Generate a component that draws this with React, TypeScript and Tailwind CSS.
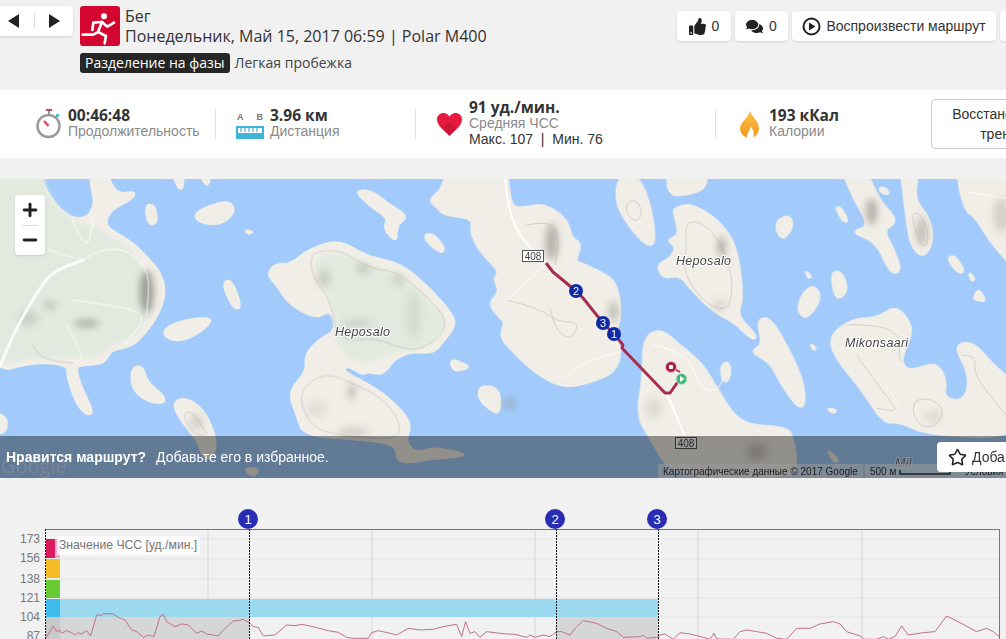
import React from 'react';
import { Minus, Plus, Star } from 'lucide-react';
import { FaComments, FaThumbsUp } from 'react-icons/fa';

// all coordinates below were read off 3x crops, so the groups scale them back down
const leftLand = [
  '-40,-40 125,-40 125,12 135,40 170,95 215,130 260,130 285,90 275,40 265,-40 310,-40 345,60 405,48 400,70 330,105 315,150 350,175 400,205 440,245 480,290 497,345 480,410 440,470 395,515 330,525 315,565 255,570 225,575 245,640 280,710 265,722 230,690 200,600 205,570 100,560 -40,600',
  '800,295 830,265 870,270 930,220 1020,195 1100,245 1200,265 1280,330 1360,420 1365,455 1330,500 1300,535 1230,530 1180,555 1150,600 1100,590 1090,600 1040,570 1030,590 1130,640 1200,700 1235,750 1215,800 1250,835 1300,815 1420,842 1300,850 1240,862 1190,860 1190,805 1030,790 910,780 890,720 865,650 920,590 915,540 960,490 1005,470 1000,420 980,410 950,430 870,390 830,330',
  '435,90 465,90 472,145 445,150',
  '585,110 680,75 705,100 690,130 650,150 590,140',
  '1075,45 1120,50 1170,90 1225,125 1190,150 1190,205 1150,160 1165,130 1120,100 1075,60',
  '1270,180 1300,175 1335,220 1325,235 1290,210',
  '735,165 760,170 745,178',
  '672,320 695,315 725,395 705,405 675,350',
  '485,470 530,440 630,425 630,450 560,495 510,495',
  '395,575 430,575 440,620 490,660 495,685 440,680 395,640',
  '515,690 550,665 610,700 650,790 640,850 610,850 590,790 560,760',
  '730,880 780,880 760,908',
  '-40,715 20,720 20,775 -40,775',
  '1350,550 1400,570 1405,580 1360,590',
  '515,-20 550,-20 550,45 530,35',
  '590,-20 630,-20 625,45',
  '1435,670 1440,630 1500,640 1500,720 1465,700',
];

const rightLand = [
  '-215,75 -170,40 -160,-40 20,-40 30,90 65,100 130,85 200,130 215,190 245,205 225,260 245,265 300,290 350,320 365,420 345,475 365,530 345,590 280,620 190,640 100,590 30,520 0,485 15,440 0,430 -35,385 0,350 -20,310 0,290 -60,230 -90,170 -80,130 -170,120 -185,100',
  '350,25 380,-20 440,40 470,200 440,215 385,150 350,90',
  '500,-20 620,-20 620,40 560,60 505,60',
  '525,100 570,85 650,130 710,210 730,370 710,420 770,480 760,495 720,460 700,440 640,410 570,340 540,300 490,310 470,270 510,250 530,215 500,195 540,180 520,110',
  '430,490 480,460 540,510 610,570 650,640 720,750 860,755 880,790 890,860 880,908 520,908 450,790 410,720 430,600',
  '770,435 810,425 870,530 910,620 915,695 890,695 840,620 810,560 750,530 790,510',
  '830,135 870,120 880,155 850,195 830,170',
  '915,285 935,305 925,310',
  '995,290 1025,290 1045,345 1015,375 1000,345',
  '910,350 945,330 965,370 920,435 890,405',
  '660,570 690,560 690,610 670,625',
  '980,700 1010,705 1000,715',
  '930,505 950,520 940,525',
  '1005,95 1025,100 1045,140 1030,140',
  '1020,-30 1090,-30 1140,80 1180,120 1185,145 1150,165 1180,220 1205,290 1170,295 1130,200 1050,170 1110,155 1060,70',
  '1140,35 1165,45 1165,60 1140,50',
  '1200,-30 1260,-30 1240,70 1290,130 1300,200 1270,250 1230,210 1215,90',
  '1340,250 1365,240 1395,290 1375,295',
  '1405,290 1425,310 1415,320',
  '1420,370 1435,340 1460,380 1430,375',
  '990,480 1060,430 1130,430 1190,390 1235,450 1230,490 1200,560 1230,590 1310,560 1340,620 1330,670 1395,680 1410,600 1360,510 1420,500 1470,560 1560,640 1560,790 1280,780 1200,740 1150,745 1090,650 1000,540',
  '1365,-40 1560,-40 1560,300 1470,200 1430,130 1390,100',
  '980,820 1020,860 1000,860',
];

const hrLeft =
  '137,415 150,395 160,378 170,395 180,390 185,400 200,392 215,398 225,405 235,398 245,402 260,392 272,408 290,345 305,346 310,341 340,342 355,352 375,360 395,390 410,395 430,412 445,405 462,410 480,350 490,343 500,365 525,380 545,372 565,375 590,400 605,393 620,402 640,405 655,408 675,385 700,363 715,362 730,358 748,368 760,380 775,382 790,408 825,405 860,375 885,377 905,373 930,378 950,383 985,392 1015,397 1040,412 1060,415 1105,415 1115,398 1135,392 1170,400 1190,405 1225,385 1260,390 1300,388 1330,380 1370,373 1385,410 1397,365 1410,400 1425,395 1440,412 1460,395 1500,400';
const hrRight =
  '0,400 20,402 45,403 80,412 90,405 105,412 130,405 150,410 170,395 185,395 210,405 230,380 250,362 290,370 320,385 350,395 370,412 420,410 430,405 440,415 470,412 480,405 495,402 520,418 540,398 570,402 610,412 630,418 642,400 650,417 700,418 720,395 740,390 770,395 800,400 830,415 860,418 890,385 930,385 960,372 1000,365 1020,372 1040,395 1080,408 1095,418 1130,418 1150,410 1165,418 1185,410 1205,378 1225,405 1270,398 1305,395 1340,348 1380,368 1430,395 1460,385 1480,395 1498,410';

const statDivider = 'h-8 flex items-center border-l border-[#e3e3e3] shrink-0';
const statValue = "font-['Open_Sans',sans-serif] font-bold text-[15.5px] text-[#333]";

// rounds a point list so the coast doesn't look cut with scissors
function smooth(points: string, closed = true) {
  const p = points.split(' ').map((s) => s.split(',').map(Number));
  const mid = (a: number[], b: number[]) => `${(a[0] + b[0]) / 2},${(a[1] + b[1]) / 2}`;
  if (!closed) {
    let d = `M${p[0].join(',')}`;
    for (let i = 1; i < p.length - 1; i++) d += ` Q${p[i].join(',')} ${mid(p[i], p[i + 1])}`;
    return `${d} L${p[p.length - 1].join(',')}`;
  }
  let d = `M${mid(p[p.length - 1], p[0])}`;
  p.forEach((pt, i) => {
    d += ` Q${pt.join(',')} ${mid(pt, p[(i + 1) % p.length])}`;
  });
  return `${d} Z`;
}

function MapPicture() {
  return (
    <svg viewBox="0 179 1006 299" className="block w-full h-full" style={{ fontFamily: '"Liberation Sans", sans-serif' }}>
      <defs>
        <filter id="soft"><feGaussianBlur stdDeviation="1.2" /></filter>
        <filter id="tint"><feGaussianBlur stdDeviation="6" /></filter>
        <filter id="shade" x="-100%" y="-100%" width="300%" height="300%"><feGaussianBlur stdDeviation="11" /></filter>
      </defs>
      <rect x="0" y="179" width="1006" height="299" fill="#a2cbfb" />

      <g transform="translate(0 175) scale(0.3333)">
        <g filter="url(#soft)">
          {leftLand.map((pts, i) => (
            <path key={i} d={smooth(pts)} fill="#f1eee7" stroke="#f1eee7" strokeWidth="7" strokeLinejoin="round" />
          ))}
        </g>
        <g filter="url(#tint)" fill="#e2eadf">
          <path d={smooth('-40,-40 125,-40 135,40 170,95 215,130 320,170 400,225 440,300 470,350 440,450 380,500 330,510 300,550 100,545 -40,590')} />
          <path d={smooth('940,250 1020,225 1110,275 1190,290 1260,345 1335,420 1335,460 1290,515 1220,528 1170,540 1090,570 1010,530 1000,400 960,320')} />
        </g>
        <g filter="url(#shade)" fill="#8f8d88">
          <ellipse cx="440" cy="350" rx="22" ry="65" opacity="0.8" />
          <ellipse cx="260" cy="445" rx="40" ry="12" opacity="0.6" />
          <ellipse cx="150" cy="390" rx="18" ry="14" opacity="0.4" />
          <ellipse cx="85" cy="430" rx="30" ry="24" opacity="0.25" />
          <ellipse cx="970" cy="310" rx="22" ry="26" opacity="0.3" />
          <ellipse cx="1090" cy="280" rx="24" ry="16" opacity="0.3" />
          <ellipse cx="1195" cy="315" rx="18" ry="16" opacity="0.3" />
          <ellipse cx="1240" cy="420" rx="22" ry="70" opacity="0.16" />
          <ellipse cx="1070" cy="445" rx="45" ry="10" opacity="0.3" />
          <ellipse cx="1055" cy="650" rx="12" ry="26" opacity="0.45" />
          <ellipse cx="950" cy="700" rx="30" ry="26" opacity="0.15" />
          <ellipse cx="1060" cy="770" rx="45" ry="14" opacity="0.3" />
          <ellipse cx="590" cy="740" rx="18" ry="26" opacity="0.3" />
          <ellipse cx="1420" cy="80" rx="45" ry="30" opacity="0.25" />
        </g>
        <g fill="none" stroke="#fff" strokeLinecap="round">
          <path d={smooth('0,575 38,475 130,320 170,285 250,255', false)} strokeWidth="8" />
          <path d={smooth('250,255 300,220 385,225 450,290 440,420', false)} strokeWidth="2.5" />
          <path d={smooth('215,375 380,395 440,430 375,505', false)} strokeWidth="2.5" />
          <path d={smooth('215,130 260,240 280,130', false)} strokeWidth="2.5" />
          <path d={smooth('200,450 250,540 235,560', false)} strokeWidth="2.5" />
          <path d={smooth('60,130 110,220 250,255', false)} strokeWidth="2" />
        </g>
        <g fill="none" stroke="#b5b3a8" strokeWidth="1.5">
          <path d={smooth('930,245 960,228 1020,225 1110,280 1190,290 1260,345 1338,425 1330,480 1250,530 1175,510 1130,490 1010,500 995,380 940,310')} />
          <path d={smooth('905,640 975,592 1060,625 1150,670 1200,740 1195,790 1100,790 950,770 905,700')} />
          <path d={smooth('100,510 110,550 220,565', false)} />
          <path d={smooth('545,715 575,708 610,760 625,780 580,780')} />
        </g>
      </g>

      <g transform="translate(500 175) scale(0.3333)">
        <g filter="url(#soft)">
          {rightLand.map((pts, i) => (
            <path key={i} d={smooth(pts)} fill="#f1eee7" stroke="#f1eee7" strokeWidth="7" strokeLinejoin="round" />
          ))}
        </g>
        <g filter="url(#shade)" fill="#8f8d88">
          <ellipse cx="155" cy="200" rx="20" ry="55" opacity="0.6" />
          <ellipse cx="340" cy="410" rx="14" ry="32" opacity="0.5" />
          <ellipse cx="665" cy="215" rx="12" ry="30" opacity="0.7" />
          <ellipse cx="660" cy="390" rx="20" ry="22" opacity="0.2" />
          <ellipse cx="1115" cy="110" rx="18" ry="40" opacity="0.6" />
          <ellipse cx="1265" cy="170" rx="18" ry="42" opacity="0.45" />
          <ellipse cx="1505" cy="120" rx="25" ry="50" opacity="0.3" />
          <ellipse cx="30" cy="685" rx="20" ry="20" opacity="0.35" />
          <ellipse cx="1300" cy="725" rx="25" ry="20" opacity="0.2" />
          <ellipse cx="460" cy="700" rx="25" ry="30" opacity="0.2" />
          <ellipse cx="770" cy="830" rx="30" ry="26" opacity="0.35" />
        </g>
        <g fill="none" stroke="#fff" strokeLinecap="round">
          <path d={smooth('15,15 25,110 70,200 140,265', false)} strokeWidth="6" />
          <path d={smooth('500,655 550,770 560,800', false)} strokeWidth="6" />
          <path d={smooth('140,265 60,340 20,375', false)} strokeWidth="2.5" />
          <path d={smooth('460,510 560,530 600,640 650,650 670,610', false)} strokeWidth="2.5" />
          <path d={smooth('360,530 250,560 190,610', false)} strokeWidth="2.5" />
          <path d={smooth('1070,540 1170,640 1195,700', false)} strokeWidth="2" />
          <path d={smooth('1400,50 1518,70', false)} strokeWidth="2" />
        </g>
        <g fill="none" stroke="#b5b3a8" strokeWidth="1.5">
          <path d={smooth('20,375 120,400 170,440 240,440 215,495 170,470 150,400', false)} />
          <path d={smooth('80,150 150,135 180,190 165,270', false)} />
          <path d={smooth('370,90 410,70 430,120 400,145')} />
          <path d={smooth('555,150 590,135 650,180 700,300 690,410 620,390 550,300 560,200')} />
          <path d={smooth('1240,670 1310,675 1335,720 1290,765 1240,735')} />
          <path d={smooth('1230,120 1260,110 1290,180 1270,230')} />
          <path d={smooth('1040,450 1195,445 1200,560', false)} />
          <path d={smooth('1070,540 1170,680 1195,710 1130,700', false)} />
          <path d={smooth('1385,540 1430,540 1420,600 1518,720', false)} />
        </g>
      </g>

      {/* road shields and place names */}
      <g fontSize="10" textAnchor="middle" fill="#444">
        <rect x="522.5" y="250.5" width="21" height="11" fill="#fff" stroke="#555" />
        <text x="533" y="259.5">408</text>
        <rect x="675.5" y="437.5" width="21" height="11" fill="#fff" stroke="#555" />
        <text x="686" y="446.5">408</text>
      </g>
      <g fontSize="12.5" fontStyle="italic" fill="#444" stroke="#fff" strokeWidth="2" paintOrder="stroke" letterSpacing="0.3">
        <text x="335" y="336">Heposalo</text>
        <text x="676" y="265">Heposalo</text>
        <text x="845" y="347">Mikonsaari</text>
        <text x="895" y="467" opacity="0.6">Mil</text>
      </g>

      {/* route */}
      <polyline
        points="546,263 553,272 576,291 583,298 603,323 614,334 623,345 622,348 665,393 670,393 677,383 681,379"
        fill="none"
        stroke="#a62f50"
        strokeWidth="3"
        strokeLinejoin="round"
      />
      <polyline points="671,367 680,372" fill="none" stroke="#a62f50" strokeWidth="2" />
      {[
        ['2', 576, 291],
        ['3', 603, 323],
        ['1', 614, 334],
      ].map(([n, x, y]) => (
        <g key={n as string}>
          <circle cx={x} cy={y} r="7" fill="#0f2aa5" />
          <text x={x} y={(y as number) + 4} fontSize="11" textAnchor="middle" fill="#fff">{n}</text>
        </g>
      ))}
      <circle cx="671" cy="367" r="5.5" fill="#a81f45" stroke="#eab9c5" strokeWidth="1" />
      <rect x="669" y="365" width="4" height="4" rx="1" fill="#fff" />
      <circle cx="681.5" cy="379" r="5.5" fill="#3cb878" stroke="#c7e8d4" strokeWidth="1" />
      <polygon points="680,376 680,382 684.5,379" fill="#fff" />

      {/* google attribution sits under the dark bar */}
      <text x="1" y="473" fontSize="20" fill="#fff" opacity="0.4" fontFamily='"Open Sans", sans-serif'>Google</text>
      <rect x="658" y="464" width="348" height="14" fill="#fff" opacity="0.55" />
      <text x="663" y="475" fontSize="10" fill="#333">Картографические данные © 2017 Google</text>
      <line x1="864" y1="464" x2="864" y2="478" stroke="#bbb" />
      <text x="870" y="475" fontSize="10" fill="#333">500 м</text>
      <polyline points="900,470 900,474 950,474 950,470" fill="none" stroke="#333" strokeWidth="1.5" />
      <text x="965" y="475" fontSize="10" fill="#333">Условия</text>
    </svg>
  );
}

function HeartRateChart() {
  const grid = [208, 372, 535, 698, 862];
  const rows = [539, 559, 579, 598, 617];
  const ticks: [string, number][] = [['173', 543], ['156', 562], ['138', 583], ['121', 602], ['104', 621], ['87', 640]];
  const laps: [string, number][] = [['1', 248], ['2', 555], ['3', 657]];
  return (
    <svg viewBox="0 478 1006 161" className="block w-full h-full" style={{ fontFamily: '"Liberation Sans", sans-serif' }}>
      {rows.map((y) => (
        <line key={y} x1="46" x2="999" y1={y} y2={y} stroke="#e4e4e4" />
      ))}
      {grid.map((x) => (
        <line key={x} x1={x} x2={x} y1="529" y2="639" stroke="#d6d6d6" />
      ))}

      <rect x="60" y="599" width="598" height="18" fill="#9bd9f1" />
      <rect x="46" y="617" width="203" height="22" fill="#d5d7d7" />
      <rect x="556" y="617" width="102" height="22" fill="#d5d7d7" />

      <rect x="46" y="539" width="14" height="19" fill="#f3a9c8" />
      <rect x="46" y="539" width="9" height="19" fill="#d91a5c" />
      <rect x="46" y="559" width="14" height="19" fill="#f6bd27" />
      <rect x="46" y="580" width="14" height="18" fill="#68cb33" />
      <rect x="46" y="599" width="14" height="18" fill="#3fbcec" />
      <rect x="46" y="617" width="14" height="22" fill="#c8caca" />

      <rect x="57" y="536" width="143" height="19" fill="#fff" opacity="0.8" />
      <text x="59" y="549" fontSize="12.2" fill="#777">Значение ЧСС [уд./мин.]</text>

      <g transform="translate(0 500) scale(0.3333)">
        <polyline points={hrLeft} fill="none" stroke="#c06f8a" strokeWidth="3" strokeLinejoin="round" />
      </g>
      <g transform="translate(500 500) scale(0.3333)">
        <polyline points={hrRight} fill="none" stroke="#c06f8a" strokeWidth="3" strokeLinejoin="round" />
      </g>

      <line x1="46" x2="999" y1="529.5" y2="529.5" stroke="#777" />
      <line x1="999.5" x2="999.5" y1="529" y2="639" stroke="#777" />
      <line x1="45.5" x2="45.5" y1="529" y2="639" stroke="#111" strokeDasharray="2 1" />
      {laps.map(([n, x]) => (
        <g key={n}>
          <line x1={x + 1.5} x2={x + 1.5} y1="529" y2="639" stroke="#111" strokeDasharray="2 1" />
          <circle cx={x} cy="519" r="10" fill="#2a2db4" />
          <text x={x} y="524" fontSize="13" textAnchor="middle" fill="#fff">{n}</text>
        </g>
      ))}
      {ticks.map(([t, y]) => (
        <text key={t} x="40" y={y} fontSize="12" textAnchor="end" fill="#777">{t}</text>
      ))}
    </svg>
  );
}

export default function App() {
  return (
    <div className="w-[1006px] h-[639px] overflow-hidden bg-[#f1f1f1] font-['Liberation_Sans',sans-serif]">
      {/* Header */}
      <div className="h-[90px] flex">
        <div className="w-[677px] shrink-0 flex items-start font-['Open_Sans',sans-serif]">
          <div className="-ml-[10px] mt-[6px] w-[83px] h-[30px] bg-white rounded shadow-sm flex items-center justify-between pl-[18px] pr-[13px] shrink-0">
            <svg width="11" height="14" viewBox="0 0 11 14"><polygon points="11,0 11,14 0,7" fill="#222" /></svg>
            <span className="w-px h-4 bg-[#ddd]" />
            <svg width="11" height="14" viewBox="0 0 11 14"><polygon points="0,0 0,14 11,7" fill="#222" /></svg>
          </div>
          <div className="ml-[7px] mt-[6px]">
            <div className="flex gap-[5px]">
              <div className="w-10 h-10 rounded-[3px] bg-[#d4062f] shrink-0">
                <svg width="40" height="40" viewBox="240 18 120 120" fill="none" stroke="#fff" strokeWidth="8" strokeLinecap="round" strokeLinejoin="round">
                  <circle cx="312" cy="49" r="9" fill="#fff" stroke="none" />
                  <path d="M277 90 L280 68 L306 66 L294 96 L318 108 L314 130" />
                  <path d="M306 66 L322 80 L342 68" />
                  <path d="M291 98 L280 104 L248 104" />
                </svg>
              </div>
              <div className="text-[16px] leading-[20px] text-[#333] whitespace-nowrap">
                <div>Бег</div>
                <div>Понедельник, Май 15, 2017 06:59 | Polar M400</div>
              </div>
            </div>
            <div className="mt-[6px] flex items-center gap-[5px] text-[14px] whitespace-nowrap">
              <span className="bg-[#262626] text-white rounded-[3px] h-5 leading-5 px-[5px]">Разделение на фазы</span>
              <span className="text-[#444]">Легкая пробежка</span>
            </div>
          </div>
        </div>
        <div className="flex items-start gap-1 mt-[11px] shrink-0 text-[14px] text-[#333]">
          <div className="w-[54px] h-[30px] bg-white rounded shadow-sm flex items-center justify-center gap-[6px]">
            <FaThumbsUp size={17} className="text-[#222]" />
            <span>0</span>
          </div>
          <div className="w-[53px] h-[30px] bg-white rounded shadow-sm flex items-center justify-center gap-[6px]">
            <FaComments size={17} className="text-[#222]" />
            <span>0</span>
          </div>
          <div className="w-[204px] h-[30px] bg-white rounded shadow-sm flex items-center justify-center gap-[5px] whitespace-nowrap">
            <svg width="19" height="19" viewBox="0 0 19 19">
              <circle cx="9.5" cy="9.5" r="8" fill="none" stroke="#222" strokeWidth="2" />
              <polygon points="7,5.5 7,13.5 13.5,9.5" fill="#222" />
            </svg>
            <span>Воспроизвести маршрут</span>
          </div>
          <div className="w-[54px] h-[30px] bg-white rounded shadow-sm" />
        </div>
      </div>

      {/* Summary */}
      <div className="h-[68px] bg-white flex items-center text-[14px] leading-[16px]">
        <div className="w-[215px] pl-[36px] flex items-center gap-[7px] shrink-0">
          <svg width="25" height="30" viewBox="0 0 25 30">
            <rect x="10" y="0" width="6" height="2" fill="#b5485d" />
            <rect x="12" y="2" width="2" height="4" fill="#999" />
            <rect x="20" y="5" width="3" height="3" fill="#5bb7c9" />
            <circle cx="12.5" cy="17" r="11" fill="#fff" stroke="#9a9a9a" strokeWidth="2.5" />
            <line x1="12.5" y1="17" x2="8" y2="12" stroke="#d6455f" strokeWidth="2.2" />
          </svg>
          <div className="whitespace-nowrap mb-[2px]">
            <div className={statValue}>00:46:48</div>
            <div className="text-[#8a8a8a]">Продолжительность</div>
          </div>
        </div>
        <div className={`${statDivider} w-[200px] pl-5 gap-[6px]`}>
          <div className="w-7 shrink-0 h-[29px]">
            <div className="flex justify-between px-px text-[9px] leading-[14px] font-bold text-[#777]"><span>A</span><span>B</span></div>
            <svg width="28" height="13" viewBox="0 0 28 13" className="block mt-[2px]">
              <rect x="1" y="1" width="26" height="11" fill="#fff" stroke="#3db4d8" strokeWidth="2" />
              <path d="M5 2v4M9 2v4M13 2v4M17 2v4M21 2v4" stroke="#3db4d8" strokeWidth="1.2" />
              <rect x="2" y="7" width="24" height="4" fill="#3db4d8" />
            </svg>
          </div>
          <div className="whitespace-nowrap mb-[2px]">
            <div className={statValue}>3.96 км</div>
            <div className="text-[#8a8a8a]">Дистанция</div>
          </div>
        </div>
        <div className={`${statDivider} w-[300px] pl-[21px] gap-[7px]`}>
          <svg width="25" height="23" viewBox="0 0 25 23" className="shrink-0">
            <path d="M12.5 23 C8 18 0 13 0 6.5 C0 2.5 3 0 6.5 0 C9 0 11 1.3 12.5 3.5 C14 1.3 16 0 18.5 0 C22 0 25 2.5 25 6.5 C25 13 17 18 12.5 23 Z" fill="#e51a3e" />
            <path d="M12.5 23 L6 15 L12.5 10 L19 15 Z" fill="#b9122f" opacity="0.6" />
          </svg>
          <div className="whitespace-nowrap mb-[2px]">
            <div className={statValue}>91 уд./мин.</div>
            <div className="text-[#8a8a8a]">Средняя ЧСС</div>
            <div className="text-[#333]">Макс. 107 &nbsp;|&nbsp; Мин. 76</div>
          </div>
        </div>
        <div className={`${statDivider} w-[216px] pl-6 gap-[11px]`}>
          <svg width="19" height="28" viewBox="0 0 19 27" className="shrink-0">
            <defs>
              <linearGradient id="flame" x1="0" y1="0" x2="0" y2="1">
                <stop offset="0" stopColor="#fbc24a" />
                <stop offset="1" stopColor="#f39a1f" />
              </linearGradient>
            </defs>
            <path d="M10 0 C11 6 19 10 19 18 C19 23 15 26 13 27 C15 23 13 19 11 16 C10 20 7 22 7 27 C3 26 0 22 0 18 C0 12 8 8 10 0 Z" fill="url(#flame)" />
          </svg>
          <div className="whitespace-nowrap mb-[2px] -ml-px">
            <div className={statValue}>193 кКал</div>
            <div className="text-[#8a8a8a]">Калории</div>
          </div>
        </div>
        <button className="w-[132px] h-[50px] shrink-0 border border-[#ccc] rounded bg-white text-center text-[#333] leading-5">
          Восстановить
          <br />
          трен.
        </button>
      </div>

      {/* Map */}
      <div className="mt-[21px] h-[299px] relative overflow-hidden">
        <MapPicture />
        <div className="absolute left-[15px] top-[16px] w-[30px] h-[60px] bg-white rounded-sm shadow-sm flex flex-col items-center">
          <div className="flex-1 flex items-center"><Plus size={20} strokeWidth={3.5} className="text-[#222]" /></div>
          <div className="w-4 h-px bg-[#ddd]" />
          <div className="flex-1 flex items-center"><Minus size={20} strokeWidth={3.5} className="text-[#222]" /></div>
        </div>
        <div className="absolute left-0 right-0 bottom-0 h-[42px] bg-black/40 flex items-center pl-[6px] text-[14px] text-white whitespace-nowrap">
          <span className="font-bold">Нравится маршрут?</span>
          <span className="ml-[10px]">Добавьте его в избранное.</span>
        </div>
        <div className="absolute left-[937px] top-[263px] w-[120px] h-[30px] bg-white rounded flex items-center gap-[5px] pl-[11px] text-[14px] text-[#333] whitespace-nowrap">
          <Star size={19} strokeWidth={2} className="text-[#222]" />
          <span>Добавить</span>
        </div>
      </div>

      {/* Heart rate */}
      <div className="h-[161px]">
        <HeartRateChart />
      </div>
    </div>
  );
}
